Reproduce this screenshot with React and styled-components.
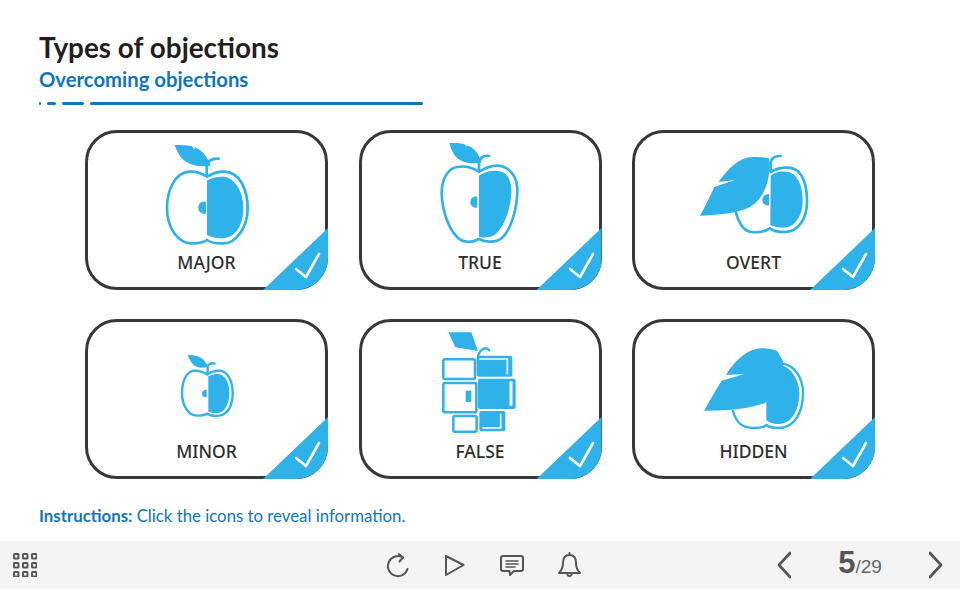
import React from 'react'
import styled, { createGlobalStyle } from 'styled-components';

const BLUE = '#2fb1ea';

const Global = createGlobalStyle`
    html, body { margin: 0; padding: 0; background: #fff; }
    #root { width: 960px; height: 590px; overflow: hidden; }
`;

const Page = styled.div`
    width: 960px;
    height: 590px;
    display: flex;
    flex-direction: column;
    font-family: "Lato", "Liberation Sans", sans-serif;
`;

const Header = styled.header`
    padding: 30px 39px 0;
`;

const Title = styled.h1`
    margin: 0;
    font-size: 27.9px;
    line-height: 34px;
    font-weight: 700;
    color: #231f20;
`;

const Subtitle = styled.h2`
    margin: 1px 0 0;
    font-size: 20.3px;
    line-height: 28px;
    font-weight: 700;
    color: #0f75bc;
`;

const Rule = styled.div`
    display: flex;
    gap: 6px;
    margin-top: 9px;
`;

const RulePart = styled.span`
    width: ${p => p.$w}px;
    height: 3px;
    border-radius: 2px;
    background: #0f75bc;
`;

const Grid = styled.main`
    display: grid;
    grid-template-columns: repeat(3, 243px);
    grid-auto-rows: 160px;
    gap: 29px 30.5px;
    padding: 25px 0 0 85px;
`;

const Card = styled.button`
    position: relative;
    box-sizing: border-box;
    padding: 10px 0 0;
    display: flex;
    flex-direction: column;
    align-items: center;
    background: #fff;
    border: 3px solid #383838;
    border-radius: 32px;
    cursor: pointer;
`;

const IconBox = styled.svg`
    display: block;
    width: 120px;
    height: 104px;
    flex: none;
`;

const Label = styled.span`
    margin-top: 3px;
    font-family: "Noto Sans", sans-serif;
    font-size: 17.5px;
    line-height: 24px;
    font-weight: 500;
    color: #2e2e2e;
`;

const Corner = styled.span`
    position: absolute;
    right: -3px;
    bottom: -3px;
    width: 65px;
    height: 62px;
    background: ${BLUE};
    border-bottom-right-radius: 32px;
    clip-path: polygon(100% 0, 100% 100%, 0 100%);
    svg { display: block; }
`;

const Instructions = styled.p`
    margin: 26px 0 0 39px;
    font-size: 16.8px;
    line-height: 22px;
    color: #0f75bc;
    b { font-weight: 700; }
`;

const Footer = styled.footer`
    margin-top: auto;
    margin-bottom: 1px;
    height: 48px;
    background: #f4f4f4;
    display: flex;
    align-items: center;
    padding: 0 17px 0 13px;
    color: #555;
`;

const ToolIcons = styled.div`
    display: flex;
    align-items: center;
    gap: 34px;
    margin-left: 349px;
`;

const Pager = styled.div`
    margin-left: auto;
    display: flex;
    align-items: center;
    gap: 33px;
`;

const PageNumber = styled.div`
    width: 72px;
    text-align: center;
    font-family: "Liberation Sans", sans-serif;
    color: #666;
    font-size: 19px;
    line-height: 48px;
    b { font-size: 31px; color: #555; }
`;

const Svg = styled.svg`
    display: block;
    flex: none;
    fill: none;
    stroke: currentColor;
    stroke-width: ${p => p.$sw || 2};
    stroke-linecap: round;
    stroke-linejoin: round;
`;

const Apple = ({ outline, inner, seed, leaf, stem, sw = 8 }) => (
    <>
        <path d={outline} fill="none" stroke={BLUE} strokeWidth={sw} />
        <path d={inner} fill={BLUE} />
        <path d={seed} fill={BLUE} />
        <path d={stem} fill="none" stroke={BLUE} strokeWidth={sw} strokeLinecap="round" />
        <path d={leaf} fill={BLUE} />
    </>
);

const Major = () => (
    <Apple
        outline="M381 155 C362 143 345 139 328 140 C285 143 261 195 261 250 C261 305 292 355 335 355 C355 355 372 352 381 345 C392 352 410 356 430 355 C470 355 503 305 503 250 C503 195 480 143 435 140 C415 139 398 145 381 155 Z"
        inner="M381 167 C395 157 420 153 438 156 C470 166 490 205 490 250 C490 295 470 340 425 340 C405 340 392 335 381 330 Z"
        seed="M378 230 C362 228 355 238 355 248 C355 260 365 268 378 266 Z"
        leaf="M284 60 C300 60 322 60 335 63 L345 74 L343 66 C365 74 380 92 392 122 C355 128 325 120 305 100 C295 88 290 75 284 60 Z"
        stem="M380 150 V125 C382 108 395 100 416 101"
    />
);

const True = () => (
    <Apple
        outline="M375 140 C355 128 330 122 310 126 C280 130 263 165 263 205 C265 260 285 320 320 345 C340 355 360 350 375 342 C390 350 420 355 440 342 C470 320 490 250 490 195 C490 160 470 125 432 122 C410 121 392 130 375 140 Z"
        inner="M375 152 C395 138 425 133 445 141 C465 150 473 175 472 200 C470 255 450 305 425 328 C410 338 390 340 375 335 Z"
        seed="M370 215 C355 213 349 222 349 232 C349 242 358 250 370 248 Z"
        leaf="M285 53 C300 53 318 54 330 57 L340 66 L338 60 C360 68 375 85 382 113 C350 118 322 112 305 95 C295 82 290 68 285 53 Z"
        stem="M375 140 V115 C377 98 390 90 405 93"
    />
);

const Overt = () => (
    <Apple
        outline="M435 143 C460 125 500 122 520 140 C540 160 546 195 546 230 C546 280 520 321 480 321 C460 321 445 318 434 310 C420 320 400 323 380 321 C355 319 340 290 332 260"
        inner="M437 152 C455 137 490 135 508 150 C528 170 533 200 533 230 C533 270 510 308 475 308 C460 308 445 305 436 300 Z"
        seed="M432 207 C418 207 412 217 412 225 C412 235 420 243 432 241 Z"
        leaf="M225 272 C240 245 255 215 268 186 L330 165 L280 171 C300 145 325 110 365 98 C385 93 420 97 432 100 C438 150 425 195 400 225 C375 255 330 268 225 272 Z"
        stem="M437 140 V115 C437 100 450 92 467 93"
    />
);

const Minor = () => (
    <Apple
        sw={7}
        outline="M381 178 C368 170 355 166 342 167 C318 170 306 200 306 235 C306 270 325 302 350 302 C365 302 375 300 381 296 C390 302 405 303 418 302 C445 298 458 270 458 235 C458 200 445 170 420 167 C405 166 392 171 381 178 Z"
        inner="M385 184 C398 176 415 174 426 181 C441 191 448 210 448 235 C448 265 435 294 412 294 C402 294 392 292 385 290 Z"
        seed="M380 224 C370 224 366 230 366 236 C366 242 372 248 380 246 Z"
        leaf="M322 120 C338 120 355 122 365 130 C375 138 380 147 384 155 C365 162 345 158 335 143 Z"
        stem="M383 178 V155 C385 146 395 143 404 146"
    />
);

const Falsy = () => (
    <>
        <path d="M283 52 H352 L372 108 L304 97 Z" fill={BLUE} />
        <path d="M372 130 C372 105 395 92 406 106" fill="none" stroke={BLUE} strokeWidth="7" strokeLinecap="round" />
        <g fill="none" stroke={BLUE} strokeWidth="7.5">
            <rect x="268" y="133" width="95" height="59" rx="5" />
            <rect x="268" y="204" width="99" height="88" rx="5" />
            <rect x="298" y="303" width="70" height="47" rx="5" />
        </g>
        <g fill={BLUE}>
            <rect x="335" y="227" width="17" height="34" />
            <rect x="368" y="122" width="107" height="63" rx="6" />
            <rect x="372" y="191" width="113" height="91" rx="6" />
            <rect x="376" y="288" width="78" height="61" rx="6" />
        </g>
        <g fill="none" stroke="#fff" strokeWidth="5">
            <path d="M376 132 H460 V178" />
            <path d="M471 199 V272" strokeWidth="9" />
            <path d="M385 339 H440 V296" />
        </g>
    </>
);

const Hidden = () => (
    <>
        <path d="M470 145 C510 150 534 190 534 235 C534 290 510 339 460 339 C445 339 432 336 425 330 C410 342 370 342 350 330 C335 320 327 300 323 285" fill="none" stroke={BLUE} strokeWidth="7" />
        <path d="M425 150 L470 150 C500 160 523 195 523 235 C523 285 500 328 460 327 C445 327 430 322 424 315 V258 Z" fill={BLUE} />
        <path d="M237 287 C255 255 272 225 290 197 L358 177 L303 180 C330 135 370 100 410 100 C430 100 455 105 458 110 L475 140 C470 190 450 240 420 264 C380 278 330 288 237 287 Z" fill={BLUE} />
    </>
);

const items = [
    { label: 'MAJOR', view: '201 54', Icon: Major },
    { label: 'TRUE', view: '198 54', Icon: True },
    { label: 'OVERT', view: '207 54', Icon: Overt },
    { label: 'MINOR', view: '201 51', Icon: Minor },
    { label: 'FALSE', view: '198 51', Icon: Falsy },
    { label: 'HIDDEN', view: '207 51', Icon: Hidden },
];

function TopicCard({ label, view, Icon }) {
    return (
        <Card>
            <IconBox viewBox={`${view} 360 312`}>
                <Icon />
            </IconBox>
            <Label>{label}</Label>
            <Corner>
                <svg width="65" height="62" viewBox="0 0 65 62">
                    <path d="M33 41 L43 49 L56 26" fill="none" stroke="#fff" strokeWidth="2.6" strokeLinecap="round" strokeLinejoin="round" />
                </svg>
            </Corner>
        </Card>
    )
}

const MenuIcon = () => (
    <Svg width="24" height="24" viewBox="0 0 24 24" $sw={1.9}>
        {[0, 9, 18].map(y => [0, 9, 18].map(x => (
            <rect key={`${x}-${y}`} x={x + 1} y={y + 1} width="4.5" height="4.5" rx=".6" />
        )))}
    </Svg>
);

export default function App() {
    return (
        <Page>
            <Global />
            <Header>
                <Title>Types of objections</Title>
                <Subtitle>Overcoming objections</Subtitle>
                <Rule>
                    <RulePart $w={2} />
                    <RulePart $w={9} />
                    <RulePart $w={22} />
                    <RulePart $w={333} />
                </Rule>
            </Header>

            <Grid>
                {items.map(item => <TopicCard key={item.label} {...item} />)}
            </Grid>

            <Instructions><b>Instructions:</b> Click the icons to reveal information.</Instructions>

            <Footer>
                <MenuIcon />
                <ToolIcons>
                    <Svg width="24" height="26" viewBox="0 0 24 26">
                        <path d="M17 5.5 A10 10 0 1 0 21.5 17" />
                        <path d="M13 2 L17 5.5 L13.5 9.5" />
                    </Svg>
                    <Svg width="22" height="24" viewBox="0 0 22 24">
                        <path d="M2 3 L19.5 12 L2 22 Z" />
                    </Svg>
                    <Svg width="24" height="24" viewBox="0 0 24 24">
                        <path d="M3 3 H21 Q23 3 23 5 V16 Q23 18 21 18 H14 L10 22 L9.5 18 H3 Q1 18 1 16 V5 Q1 3 3 3 Z" />
                        <path d="M6 8 H18 M6 11 H18 M6 14 H15" strokeWidth="1.5" />
                    </Svg>
                    <Svg width="24" height="26" viewBox="0 0 24 26">
                        <path d="M1 21 Q5 17 5 11 Q5 3 11.5 3 Q18 3 18 11 Q18 17 22 21 Z" />
                        <path d="M11.5 1 V3 M9.5 23 Q11.5 25 13.5 23" />
                    </Svg>
                </ToolIcons>
                <Pager>
                    <Svg width="14" height="28" viewBox="0 0 14 28" $sw={2.6}>
                        <path d="M13 2 L2 14 L13 26" />
                    </Svg>
                    <PageNumber><b>5</b>/29</PageNumber>
                    <Svg width="14" height="28" viewBox="0 0 14 28" $sw={2.6}>
                        <path d="M1 2 L12 14 L1 26" />
                    </Svg>
                </Pager>
            </Footer>
        </Page>
    )
}
